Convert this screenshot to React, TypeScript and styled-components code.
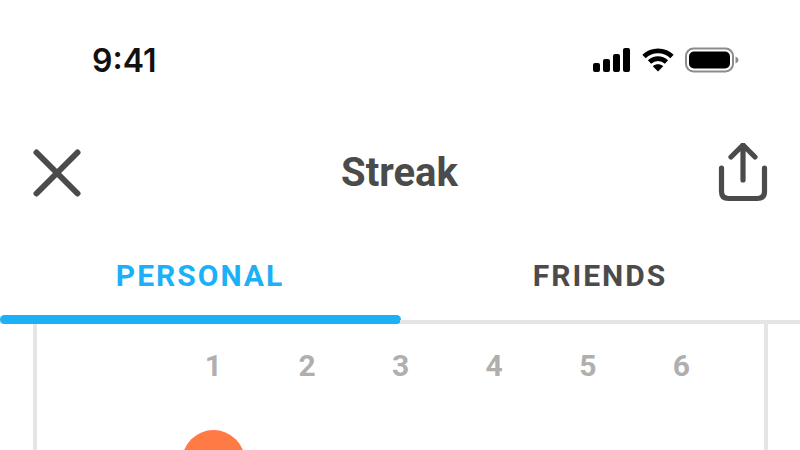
import styled, { createGlobalStyle } from "styled-components";

const GlobalStyle = createGlobalStyle`
  html, body {
    margin: 0;
    padding: 0;
    background: #fff;
  }
  * {
    box-sizing: border-box;
  }
`;

const days = ["", "1", "2", "3", "4", "5", "6"];

const App = () => {
  return (
    <Screen>
      <GlobalStyle />
      <StatusBar>
        <Time>9:41</Time>
        <StatusIcons>
          <svg width="38" height="24" viewBox="0 0 38 24" fill="#000">
            <rect x="0" y="15" width="7" height="9" rx="2" />
            <rect x="10" y="11" width="7" height="13" rx="2" />
            <rect x="20" y="6" width="7" height="18" rx="2" />
            <rect x="30" y="0" width="7" height="24" rx="2" />
          </svg>
          <svg width="32" height="24" viewBox="0 0 32 24" fill="none" stroke="#000" strokeWidth="4.8">
            <path d="M2 8.5C10 1 22 1 30 8.5" />
            <path d="M7.5 14C12.5 9.5 19.5 9.5 24.5 14" />
            <path d="M16 23.5L10.8 18.2C13.8 15.6 18.2 15.6 21.2 18.2Z" fill="#000" stroke="none" />
          </svg>
          <svg width="54" height="26" viewBox="0 0 54 26">
            <rect x="1" y="1.5" width="47" height="23" rx="7.5" fill="none" stroke="#8c8c8c" strokeWidth="2" />
            <rect x="4" y="4.5" width="41" height="17" rx="5" fill="#000" />
            <path d="M50.5 9.5C52.5 10.3 53.5 11.5 53.5 13C53.5 14.5 52.5 15.7 50.5 16.5Z" fill="#8c8c8c" />
          </svg>
        </StatusIcons>
      </StatusBar>
      <Header>
        <svg width="48" height="48" viewBox="0 0 48 48" fill="none" stroke="#4b4b4b" strokeWidth="6" strokeLinecap="round">
          <path d="M3.5 3.5L44.5 44.5M44.5 3.5L3.5 44.5" />
        </svg>
        <Title>Streak</Title>
        <svg width="50" height="60" viewBox="0 0 50 60" fill="none" stroke="#4b4b4b" strokeWidth="5.2" strokeLinecap="round" strokeLinejoin="round">
          <path d="M25 37V2M13 14L25 2L37 14" />
          <path d="M3.5 25V48.5C3.5 53 6 55.5 10.5 55.5H39.5C44 55.5 46.5 53 46.5 48.5V25" />
        </svg>
      </Header>
      <Tabs>
        <Tab $active>PERSONAL</Tab>
        <Tab>FRIENDS</Tab>
      </Tabs>
      <Calendar>
        <DayRow>
          {days.map((day, index) => (
            <Day key={index}>{day}</Day>
          ))}
        </DayRow>
        <DayRow>
          <div />
          <Cell>
            <StreakDot />
          </Cell>
        </DayRow>
      </Calendar>
    </Screen>
  );
};

export default App;

const Screen = styled.div`
  width: 800px;
  height: 450px;
  overflow: hidden;
  background: #fff;
  display: flex;
  flex-direction: column;
`;

const StatusBar = styled.div`
  height: 120px;
  flex: none;
  display: flex;
  align-items: center;
  justify-content: space-between;
  padding: 0 61px 0 92px;
`;

const Time = styled.div`
  font-family: Inter, sans-serif;
  font-size: 32px;
  font-weight: 600;
  color: #111;
`;

const StatusIcons = styled.div`
  display: flex;
  align-items: center;
  gap: 11px;
`;

const Header = styled.div`
  height: 105px;
  flex: none;
  display: flex;
  align-items: center;
  justify-content: space-between;
  padding: 0 32px 0 33px;
`;

const Title = styled.div`
  font-family: Roboto, sans-serif;
  font-size: 40px;
  font-weight: 700;
  color: #4b4b4b;
`;

const Tabs = styled.div`
  height: 99px;
  flex: none;
  display: grid;
  grid-template-columns: 1fr 1fr;
`;

const Tab = styled.div<{ $active?: boolean }>`
  display: flex;
  align-items: center;
  justify-content: center;
  padding-top: 2px;
  font-family: Roboto, sans-serif;
  font-size: 30px;
  font-weight: 700;
  letter-spacing: 2px;
  color: ${(p) => (p.$active ? "#1cb0f6" : "#4b4b4b")};
  box-shadow: inset 0 -4px 0 #e5e5e5;
  position: relative;

  &::after {
    content: "";
    display: ${(p) => (p.$active ? "block" : "none")};
    position: absolute;
    left: 0;
    right: -1px;
    bottom: 0;
    height: 9px;
    border-radius: 4.5px;
    background: #1cb0f6;
  }
`;

const Calendar = styled.div`
  flex: 1;
  margin: 0 32px 0 33px;
  padding: 24px 36px 0 36px;
  border-left: 4px solid #e5e5e5;
  border-right: 4px solid #e5e5e5;
`;

const DayRow = styled.div`
  display: grid;
  grid-template-columns: repeat(7, 93.6px);
  margin-bottom: 47px;
`;

const Day = styled.div`
  text-align: center;
  font-family: Roboto, sans-serif;
  font-size: 30px;
  font-weight: 700;
  color: #afafaf;
`;

const Cell = styled.div`
  display: flex;
  justify-content: center;
`;

const StreakDot = styled.div`
  width: 63px;
  height: 63px;
  flex: none;
  border-radius: 50%;
  background: #ff7a45;
`;
